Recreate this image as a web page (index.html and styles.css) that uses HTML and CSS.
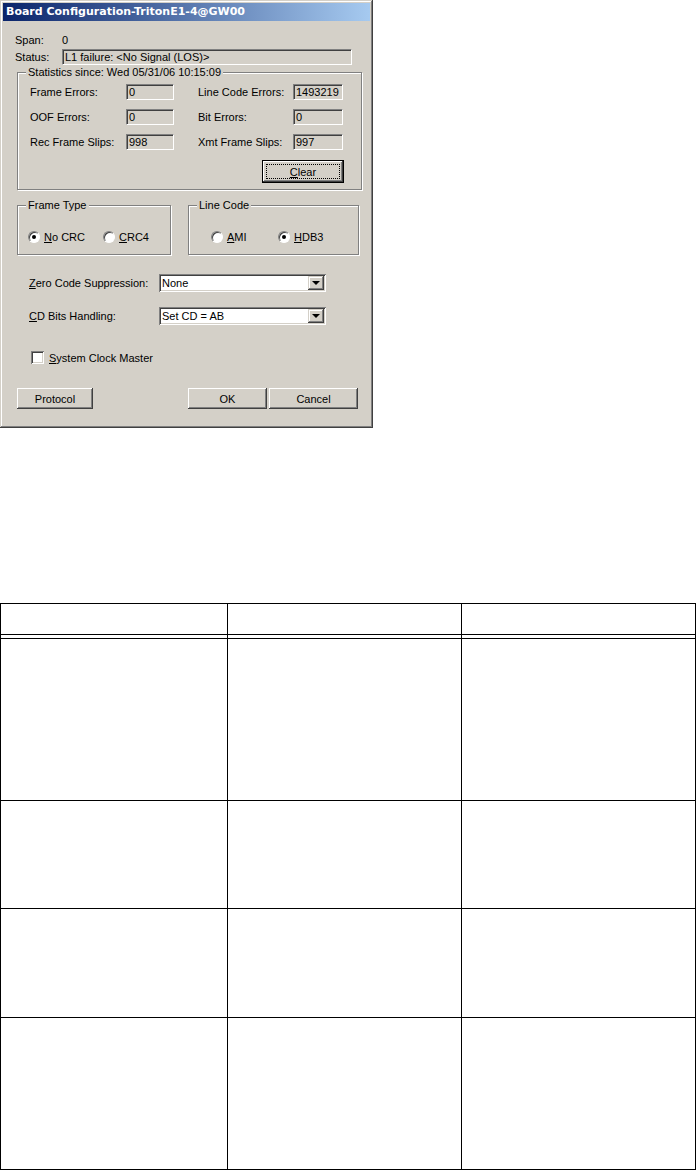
FILE: index.html
```html
<!DOCTYPE html>
<html lang="en">
<head>
    <meta charset="UTF-8">
    <meta name="viewport" content="width=device-width, initial-scale=1.0">
    <title>Board Configuration</title>
    <link rel="stylesheet" href="styles.css">
</head>
<body>
    <div class="dialog">
        <div class="titlebar">Board Configuration-TritonE1-4@GW00</div>

        <div class="info-row first">
            <span class="info-label">Span:</span>
            <span>0</span>
        </div>
        <div class="info-row">
            <span class="info-label">Status:</span>
            <span class="field status-field">L1 failure: &lt;No Signal (LOS)&gt;</span>
        </div>

        <fieldset class="group stats">
            <legend>Statistics since: Wed 05/31/06 10:15:09</legend>
            <div class="stats-body">
                <div class="stats-grid">
                    <span>Frame Errors:</span><span class="field small">0</span>
                    <span>Line Code Errors:</span><span class="field wide">1493219</span>
                    <span>OOF Errors:</span><span class="field small">0</span>
                    <span>Bit Errors:</span><span class="field wide">0</span>
                    <span>Rec Frame Slips:</span><span class="field small">998</span>
                    <span>Xmt Frame Slips:</span><span class="field wide">997</span>
                </div>
                <button class="btn btn-default clear-btn"><span class="focus-ring"><u>C</u>lear</span></button>
            </div>
        </fieldset>

        <div class="option-groups">
            <fieldset class="group frame-type">
                <legend>Frame Type</legend>
                <div class="options">
                    <label class="option first-option"><span class="radio checked"></span><span><u>N</u>o CRC</span></label>
                    <label class="option"><span class="radio"></span><span><u>C</u>RC4</span></label>
                </div>
            </fieldset>
            <fieldset class="group line-code">
                <legend>Line Code</legend>
                <div class="options">
                    <label class="option first-option"><span class="radio"></span><span><u>A</u>MI</span></label>
                    <label class="option"><span class="radio checked"></span><span><u>H</u>DB3</span></label>
                </div>
            </fieldset>
        </div>

        <div class="settings">
            <div class="setting-row">
                <span class="setting-label"><u>Z</u>ero Code Suppression:</span>
                <div class="combo"><span class="combo-text">None</span><span class="combo-arrow"></span></div>
            </div>
            <div class="setting-row cd-row">
                <span class="setting-label"><u>C</u>D Bits Handling:</span>
                <div class="combo"><span class="combo-text">Set CD = AB</span><span class="combo-arrow"></span></div>
            </div>
            <label class="check-row"><span class="checkbox"></span><span><u>S</u>ystem Clock Master</span></label>
        </div>

        <div class="button-row">
            <button class="btn protocol-btn">Protocol</button>
            <button class="btn ok-btn">OK</button>
            <button class="btn cancel-btn">Cancel</button>
        </div>
    </div>

    <table class="params">
        <colgroup>
            <col class="col-a">
            <col class="col-b">
            <col class="col-c">
        </colgroup>
        <tr class="head-row"><th></th><th></th><th></th></tr>
        <tr class="gap-row"><td></td><td></td><td></td></tr>
        <tr class="row-1"><td></td><td></td><td></td></tr>
        <tr class="row-2"><td></td><td></td><td></td></tr>
        <tr class="row-3"><td></td><td></td><td></td></tr>
        <tr class="row-4"><td></td><td></td><td></td></tr>
    </table>
</body>
</html>
```

FILE: styles.css
```css
body {
    margin: 0;
    background-color: #ffffff;
    font-family: "Liberation Sans", Arial, sans-serif;
    font-size: 11px;
    color: #000;
}

/* classic window frame */
.dialog {
    width: 373px;
    height: 428px;
    box-sizing: border-box;
    padding: 3px;
    background-color: #d4d0c8;
    box-shadow: inset -1px -1px #404040, inset 1px 1px #d4d0c8, inset -2px -2px #808080, inset 2px 2px #ffffff;
}
.titlebar {
    height: 18px;
    line-height: 18px;
    padding-left: 3px;
    background: linear-gradient(to right, #0a246a, #a6caf0);
    color: #ffffff;
    font-family: "DejaVu Sans", Verdana, sans-serif;
    font-weight: bold;
    font-size: 11px;
}

.info-row {
    display: flex;
    align-items: center;
    height: 16px;
    margin-top: 1px;
    padding-left: 12px;
}
.info-row.first {
    margin-top: 11px;
}
.info-label {
    width: 47px;
}

.field {
    box-sizing: border-box;
    height: 16px;
    line-height: 12px;
    padding: 1px 2px;
    border: 1px solid;
    border-color: #808080 #ffffff #ffffff #808080;
    box-shadow: inset 1px 1px #404040, inset -1px -1px #d4d0c8;
    white-space: nowrap;
}
.status-field {
    width: 290px;
}
.field.small {
    width: 48px;
}
.field.wide {
    width: 50px;
}

/* etched group boxes */
.group {
    margin: 0;
    padding: 0;
    border: 1px solid #808080;
    box-shadow: inset 1px 1px #ffffff, 1px 1px #ffffff;
    box-sizing: border-box;
}
.group legend {
    margin-left: 8px;
    padding: 0 2px;
    line-height: 13px;
    background-color: #d4d0c8;
}

.stats {
    width: 345px;
    margin: 1px 0 0 14px;
}
.stats-body {
    padding: 5px 0 6px 12px;
}
.stats-grid {
    display: grid;
    grid-template-columns: 96px 72px 95px 50px;
    grid-auto-rows: 16px;
    row-gap: 9px;
    align-items: center;
}

.btn {
    display: block;
    box-sizing: border-box;
    padding: 0;
    border: none;
    background-color: #d4d0c8;
    font-family: inherit;
    font-size: 11px;
    color: #000;
    box-shadow: inset -1px -1px #404040, inset 1px 1px #ffffff, inset -2px -2px #808080, inset 2px 2px #d4d0c8;
}
.btn-default {
    border: 1px solid #000;
    padding: 3px;
    display: flex;
}
.focus-ring {
    flex: 1;
    display: flex;
    align-items: center;
    justify-content: center;
    border: 1px dotted #000;
}
.clear-btn {
    width: 82px;
    height: 23px;
    margin: 10px 0 0 232px;
}

.option-groups {
    display: flex;
    margin: 9px 0 0 14px;
}
.frame-type {
    width: 154px;
}
.line-code {
    width: 171px;
    margin-left: 17px;
}
.options {
    display: flex;
    padding: 18px 0 11px 10px;
}
.line-code .options {
    padding-left: 22px;
}
.option {
    display: flex;
    align-items: center;
    height: 13px;
}
.frame-type .first-option {
    width: 75px;
}
.line-code .first-option {
    width: 67px;
}
.radio {
    position: relative;
    width: 10px;
    height: 10px;
    margin-right: 4px;
    border: 1px solid;
    border-color: #808080 #ffffff #ffffff #808080;
    border-radius: 50%;
    background-color: #ffffff;
    box-shadow: inset 1px 1px #404040;
}
.radio.checked::after {
    content: "";
    position: absolute;
    left: 3px;
    top: 3px;
    width: 4px;
    height: 4px;
    border-radius: 50%;
    background-color: #000;
}

.settings {
    padding-left: 26px;
}
.setting-row {
    display: flex;
    align-items: center;
    height: 18px;
    margin-top: 19px;
}
.setting-row.cd-row {
    margin-top: 15px;
}
.setting-label {
    width: 130px;
}
.combo {
    display: flex;
    align-items: center;
    box-sizing: border-box;
    width: 167px;
    height: 18px;
    padding: 2px;
    background-color: #ffffff;
    box-shadow: inset 1px 1px #808080, inset -1px -1px #ffffff, inset 2px 2px #404040, inset -2px -2px #d4d0c8;
}
.combo-text {
    flex: 1;
    padding-left: 1px;
}
.combo-arrow {
    position: relative;
    width: 16px;
    height: 14px;
    background-color: #d4d0c8;
    box-shadow: inset -1px -1px #404040, inset 1px 1px #d4d0c8, inset -2px -2px #808080, inset 2px 2px #ffffff;
}
.combo-arrow::after {
    content: "";
    position: absolute;
    left: 4px;
    top: 5px;
    border-left: 4px solid transparent;
    border-right: 4px solid transparent;
    border-top: 4px solid #000;
}

.check-row {
    display: flex;
    align-items: center;
    height: 13px;
    margin-top: 26px;
    padding-left: 2px;
}
.checkbox {
    box-sizing: border-box;
    width: 13px;
    height: 13px;
    margin-right: 5px;
    background-color: #ffffff;
    box-shadow: inset 1px 1px #808080, inset -1px -1px #ffffff, inset 2px 2px #404040, inset -2px -2px #d4d0c8;
}

.button-row {
    display: flex;
    margin-top: 24px;
    padding-left: 14px;
}
.button-row .btn {
    height: 21px;
}
.protocol-btn {
    width: 76px;
}
.ok-btn {
    width: 79px;
    margin-left: 95px;
}
.cancel-btn {
    width: 89px;
    margin-left: 2px;
}

/* parameter table */
.params {
    margin-top: 175px;
    width: 696px;
    table-layout: fixed;
    border-collapse: separate;
    border-spacing: 0;
    border-top: 1px solid #000;
    border-left: 1px solid #000;
}
.params th,
.params td {
    box-sizing: border-box;
    padding: 0;
    border-right: 1px solid #000;
    border-bottom: 1px solid #000;
}
.col-a {
    width: 227px;
}
.col-b,
.col-c {
    width: 234px;
}
.head-row th {
    height: 31px;
}
.gap-row td {
    height: 4px;
}
.row-1 td {
    height: 162px;
}
.row-2 td {
    height: 108px;
}
.row-3 td {
    height: 109px;
}
.row-4 td {
    height: 152px;
}
```
